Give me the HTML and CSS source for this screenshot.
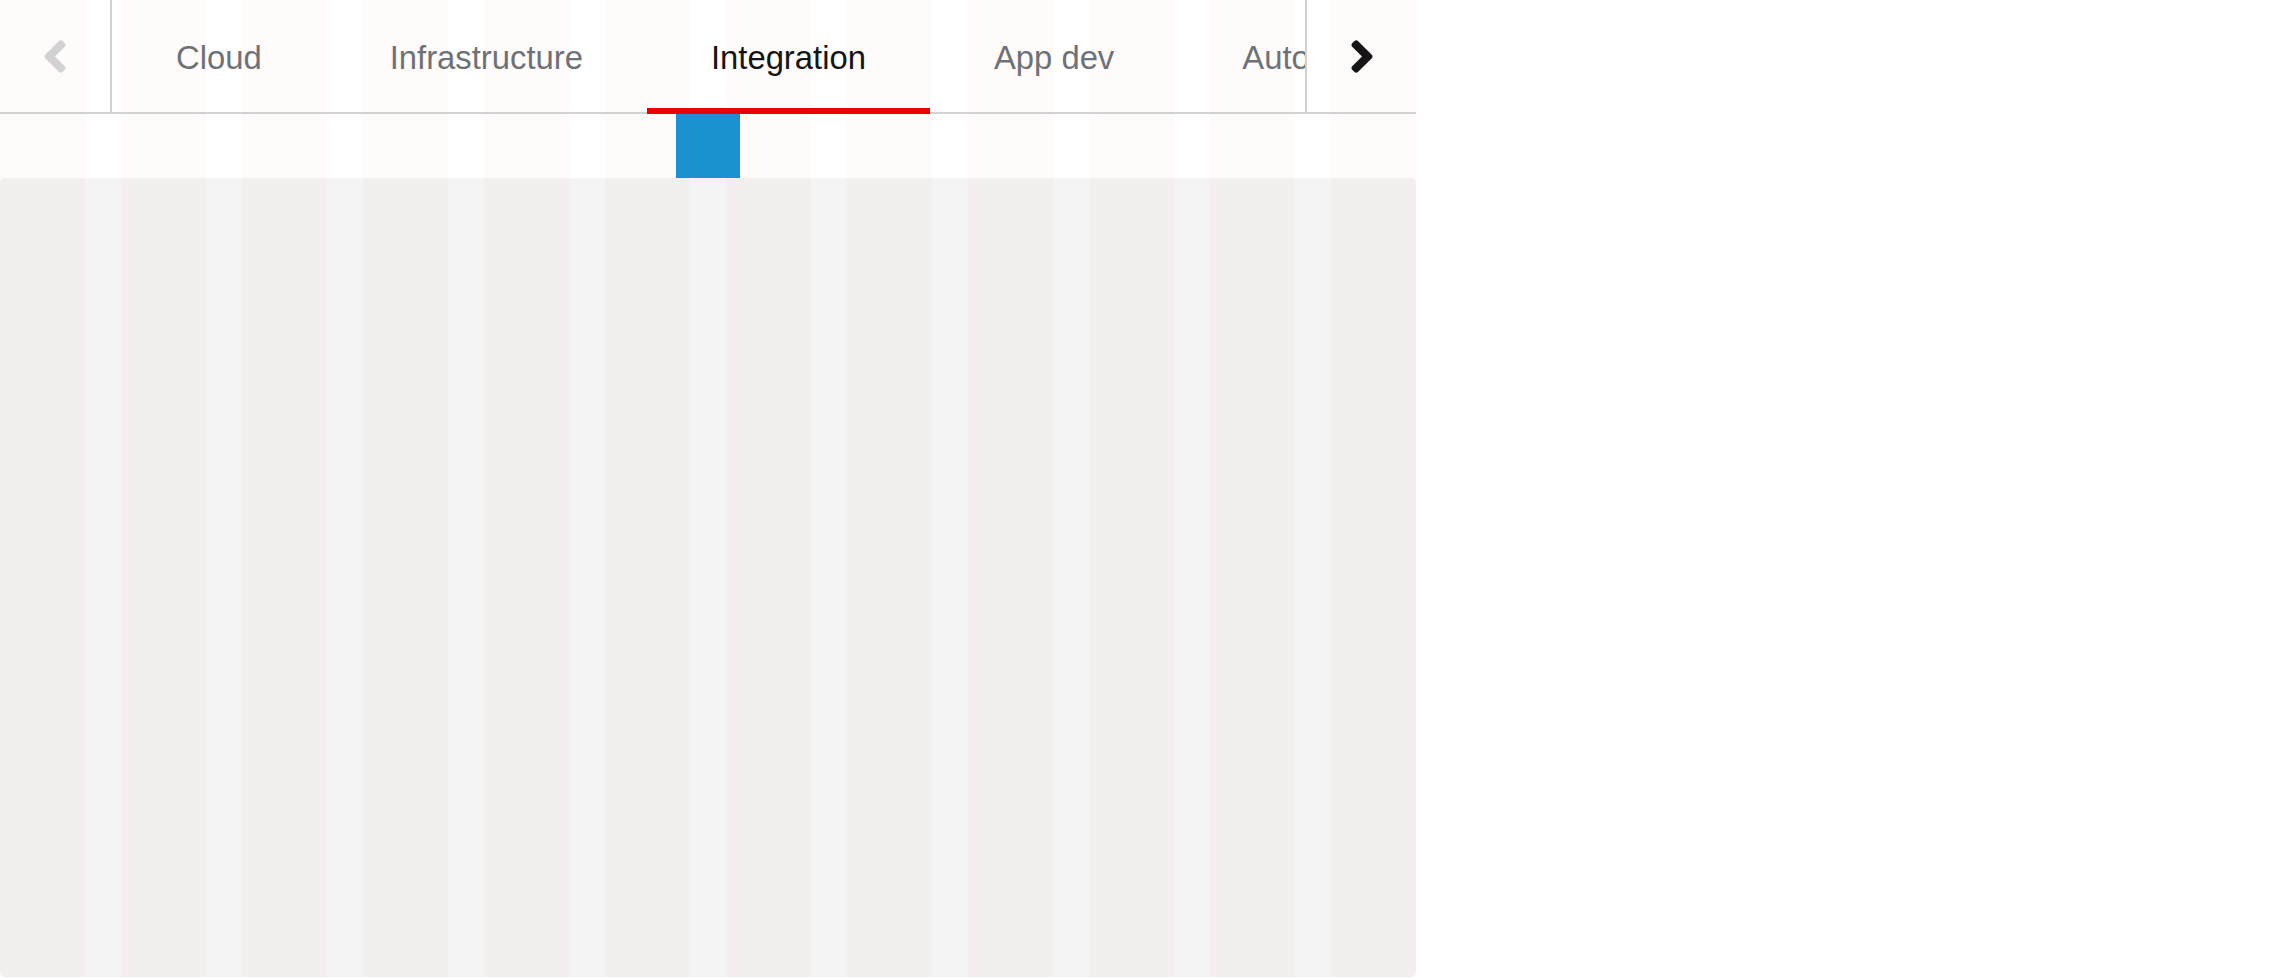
FILE: index.html
```html
<!DOCTYPE html>
<html lang="en">
<head>
<meta charset="utf-8">
<title>Tabs</title>
<link rel="stylesheet" href="styles.css">
</head>
<body>
<div class="demo">
  <div class="tabs">
    <button class="scroll-btn scroll-btn--left" disabled aria-label="Scroll left">
      <svg class="chevron" viewBox="22 94 212 324" width="22" height="33" aria-hidden="true"><path d="M31.7 239l136-136c9.4-9.4 24.6-9.4 33.9 0l22.6 22.6c9.4 9.4 9.4 24.6 0 33.9L127.9 256l96.4 96.4c9.4 9.4 9.4 24.6 0 33.9L201.7 409c-9.4 9.4-24.6 9.4-33.9 0l-136-136c-9.5-9.4-9.5-24.6-.1-34z"/></svg>
    </button>
    <div class="tabs-viewport">
      <ul class="tab-list">
        <li class="tab">Cloud</li>
        <li class="tab">Infrastructure</li>
        <li class="tab tab--active">Integration</li>
        <li class="tab">App dev</li>
        <li class="tab">Automation</li>
        <li class="tab">Security</li>
      </ul>
    </div>
    <button class="scroll-btn scroll-btn--right" aria-label="Scroll right">
      <svg class="chevron" viewBox="22 94 212 324" width="22" height="33" aria-hidden="true"><path d="M224.3 273l-136 136c-9.4 9.4-24.6 9.4-33.9 0l-22.6-22.6c-9.4-9.4-9.4-24.6 0-33.9l96.4-96.4-96.4-96.4c-9.4-9.4-9.4-24.6 0-33.9L54.3 103c9.4-9.4 24.6-9.4 33.9 0l136 136c9.5 9.4 9.5 24.6.1 34z"/></svg>
    </button>
  </div>
  <div class="marker-row"><div class="marker"></div></div>
  <div class="panel"></div>
</div>
</body>
</html>
```
FILE: styles.css
```css
* { box-sizing: border-box; }
html, body { margin: 0; padding: 0; background: #ffffff; }
body { font-family: "Liberation Sans", Arial, sans-serif; }

.demo {
  width: 1416px;
  background: repeating-linear-gradient(to right, #fffbfa 0 85px, #ffffff 85px 121px);
}

.tabs {
  display: flex;
  height: 114px;
  box-shadow: inset 0 -2px 0 #d2d2d2;
}

.scroll-btn {
  flex: none;
  height: 112px;
  border: 0;
  padding: 0;
  margin: 0;
  background: transparent;
  display: flex;
  align-items: center;
  justify-content: center;
}
.scroll-btn--left { width: 112px; border-right: 2px solid #d2d2d2; }
.scroll-btn--right { width: 111px; border-left: 2px solid #d2d2d2; }
.scroll-btn--left .chevron { fill: #d2d2d2; }
.scroll-btn--right .chevron { fill: #151515; }

.tabs-viewport { flex: 1; min-width: 0; overflow: hidden; }

.tab-list {
  display: flex;
  list-style: none;
  margin: 0;
  padding: 0;
}

.tab {
  flex: none;
  position: relative;
  height: 114px;
  padding: 2px 64px 0;
  line-height: 112px;
  font-size: 32.8px;
  color: #6e7277;
  white-space: nowrap;
}
.tab--active { color: #151515; }
.tab--active::after {
  content: "";
  position: absolute;
  left: 0;
  right: 0;
  bottom: 0;
  height: 6px;
  background: #ee0000;
}

.marker-row { height: 64px; }
.marker {
  width: 64px;
  height: 64px;
  margin-left: 676px;
  background: #1b92cf;
}

.panel {
  height: 799px;
  border-radius: 5px;
  background: repeating-linear-gradient(to right, #f2efee 0 85px, #f4f4f4 85px 121px);
}
```
